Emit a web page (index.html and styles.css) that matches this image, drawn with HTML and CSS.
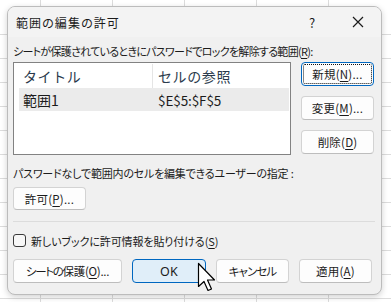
FILE: index.html
```html
<!DOCTYPE html>
<html lang="ja">
<head>
<meta charset="utf-8">
<link rel="stylesheet" href="styles.css">
</head>
<body>
<div class="dialog">
  <div class="titlebar">
    <span class="title">範囲の編集の許可</span>
    <span class="help">?</span>
    <span class="close"><svg width="12" height="12" viewBox="0 0 12 12"><path d="M1 1L11 11M11 1L1 11" stroke="#1b1b1b" stroke-width="1.2" fill="none"/></svg></span>
  </div>
  <div class="body">
    <div class="label label1">シートが保護されているときにパスワードでロックを解除する範囲(<u>R</u>):</div>
    <div class="main">
      <div class="list">
        <div class="list-head">
          <span class="col1">タイトル</span>
          <span class="col2">セルの参照</span>
        </div>
        <div class="list-row">
          <span class="col1">範囲1</span>
          <span class="col2 ref">$E$5:$F$5</span>
        </div>
      </div>
      <div class="side">
        <button class="btn focus">新規(<u>N</u>)...</button>
        <button class="btn">変更(<u>M</u>)...</button>
        <button class="btn">削除(<u>D</u>)</button>
      </div>
    </div>
    <div class="label label2">パスワードなしで範囲内のセルを編集できるユーザーの指定 :</div>
    <button class="btn permit">許可(<u>P</u>)...</button>
    <div class="sep"></div>
    <label class="check"><span class="box"></span><span>新しいブックに許可情報を貼り付ける(<u>S</u>)</span></label>
    <div class="footer">
      <button class="btn wide"><span class="kana">シートの</span>保護(<u>O</u>)...</button>
      <button class="btn ok">OK</button>
      <button class="btn"><span class="kana">キャンセル</span></button>
      <button class="btn">適用(<u>A</u>)</button>
    </div>
  </div>
  <svg class="cursor" width="20" height="30" viewBox="0 0 20 30"><path d="M1.5 1.5V24.5L7 19.5L11 28.5L14.5 27L10.5 18H17.5Z" fill="#fff" stroke="#000" stroke-width="1.2" stroke-linejoin="round"/></svg>
</div>
</body>
</html>
```

FILE: styles.css
```css
* { box-sizing: border-box; }
html, body { margin: 0; padding: 0; }
body {
  width: 391px;
  height: 302px;
  overflow: hidden;
  background-color: #ffffff;
  background-image:
    repeating-linear-gradient(to right, transparent 0, transparent 40px, #dcdcdc 40px, #dcdcdc 41px, transparent 41px, transparent 72px),
    repeating-linear-gradient(to bottom, transparent 0, transparent 23px, #dcdcdc 23px, #dcdcdc 24px);
  background-position: 0 0, 0 11px;
  font-family: "Noto Sans CJK JP", "Noto Sans", sans-serif;
  font-feature-settings: "palt";
  color: #1b1b1b;
  padding: 6px 0 0 7px;
}
.dialog {
  position: relative;
  width: 375px;
  height: 289px;
  background: #f0f0f0;
  border: 1px solid #bcbcbc;
  border-radius: 8px;
  box-shadow: 0 2px 6px rgba(0,0,0,0.18);
  overflow: hidden;
}
.titlebar {
  height: 30px;
  display: flex;
  align-items: center;
  background: #f3f3f3;
  padding-left: 8px;
}
.title { font-size: 12px; flex: 1; letter-spacing: 1.1px; padding-top: 1px; }
.help { font-size: 13px; width: 46px; text-align: center; color: #1b1b1b; }
.close { width: 46px; display: flex; justify-content: center; }
.body { padding: 0 7px 0 5px; }
.label { font-size: 11px; line-height: 16px; }
.label1 { margin-top: 6px; letter-spacing: -0.7px; }
.main { display: flex; gap: 10px; margin-top: 3px; }
.list {
  width: 278px;
  height: 93px;
  background: #fff;
  border: 1px solid #828282;
  padding: 1px 1px 0 5px;
}
.list-head, .list-row {
  display: flex;
  font-size: 14px;
  font-feature-settings: normal;
  align-items: center;
}
.list-head { height: 24px; color: #2a3a4c; letter-spacing: 0.6px; }
.list-row { height: 23px; background: #ebebeb; }
.col1 { width: 133px; padding-left: 4px; }
.col2 { flex: 1; padding-left: 5px; height: 100%; display: flex; align-items: center; }
.list-head .col2 { border-left: 1px solid #e5e5e5; }
.list-row .col2 { padding-left: 6px; }
.ref { font-size: 13.5px; letter-spacing: -0.1px; }
.side { display: flex; flex-direction: column; gap: 10px; }
.btn {
  font-family: inherit;
  font-feature-settings: "palt";
  font-size: 11.5px;
  color: #1b1b1b;
  height: 24px;
  width: 73px;
  padding: 0;
  background: #fdfdfd;
  border: 1px solid #d3d3d3;
  border-bottom-color: #bdbdbd;
  border-radius: 4px;
  letter-spacing: 0.2px;
}
.kana { letter-spacing: -0.9px; }
.btn.focus { border: 1px solid #0067c0; outline: 1px dotted #111; outline-offset: -3px; }
.label2 { margin-top: 10px; letter-spacing: -0.2px; }
.permit { margin-top: 6px; display: block; height: 23px; }
.sep { height: 1px; background: #dcdcdc; margin: 11px 0 0 0; width: 362px; }
.check { display: flex; align-items: center; gap: 5px; font-size: 11px; margin-top: 12px; height: 13px; letter-spacing: -0.1px; }
.box { width: 13px; height: 13px; border: 1px solid #3a3a3a; border-radius: 3px; background: #f7f7f7; flex: none; }
.footer { display: flex; gap: 10px; margin-top: 12px; }
.footer .wide { width: 109px; letter-spacing: -0.3px; }
.footer .wide .kana { letter-spacing: -1.3px; }
.footer .ok { width: 74px; background: #e0eef9; border-color: #0067c0; font-family: "Noto Sans", sans-serif; font-size: 12.5px; }
.cursor { position: absolute; left: 189px; top: 255px; }
u { text-decoration-thickness: 1px; text-underline-offset: 2px; }
```
